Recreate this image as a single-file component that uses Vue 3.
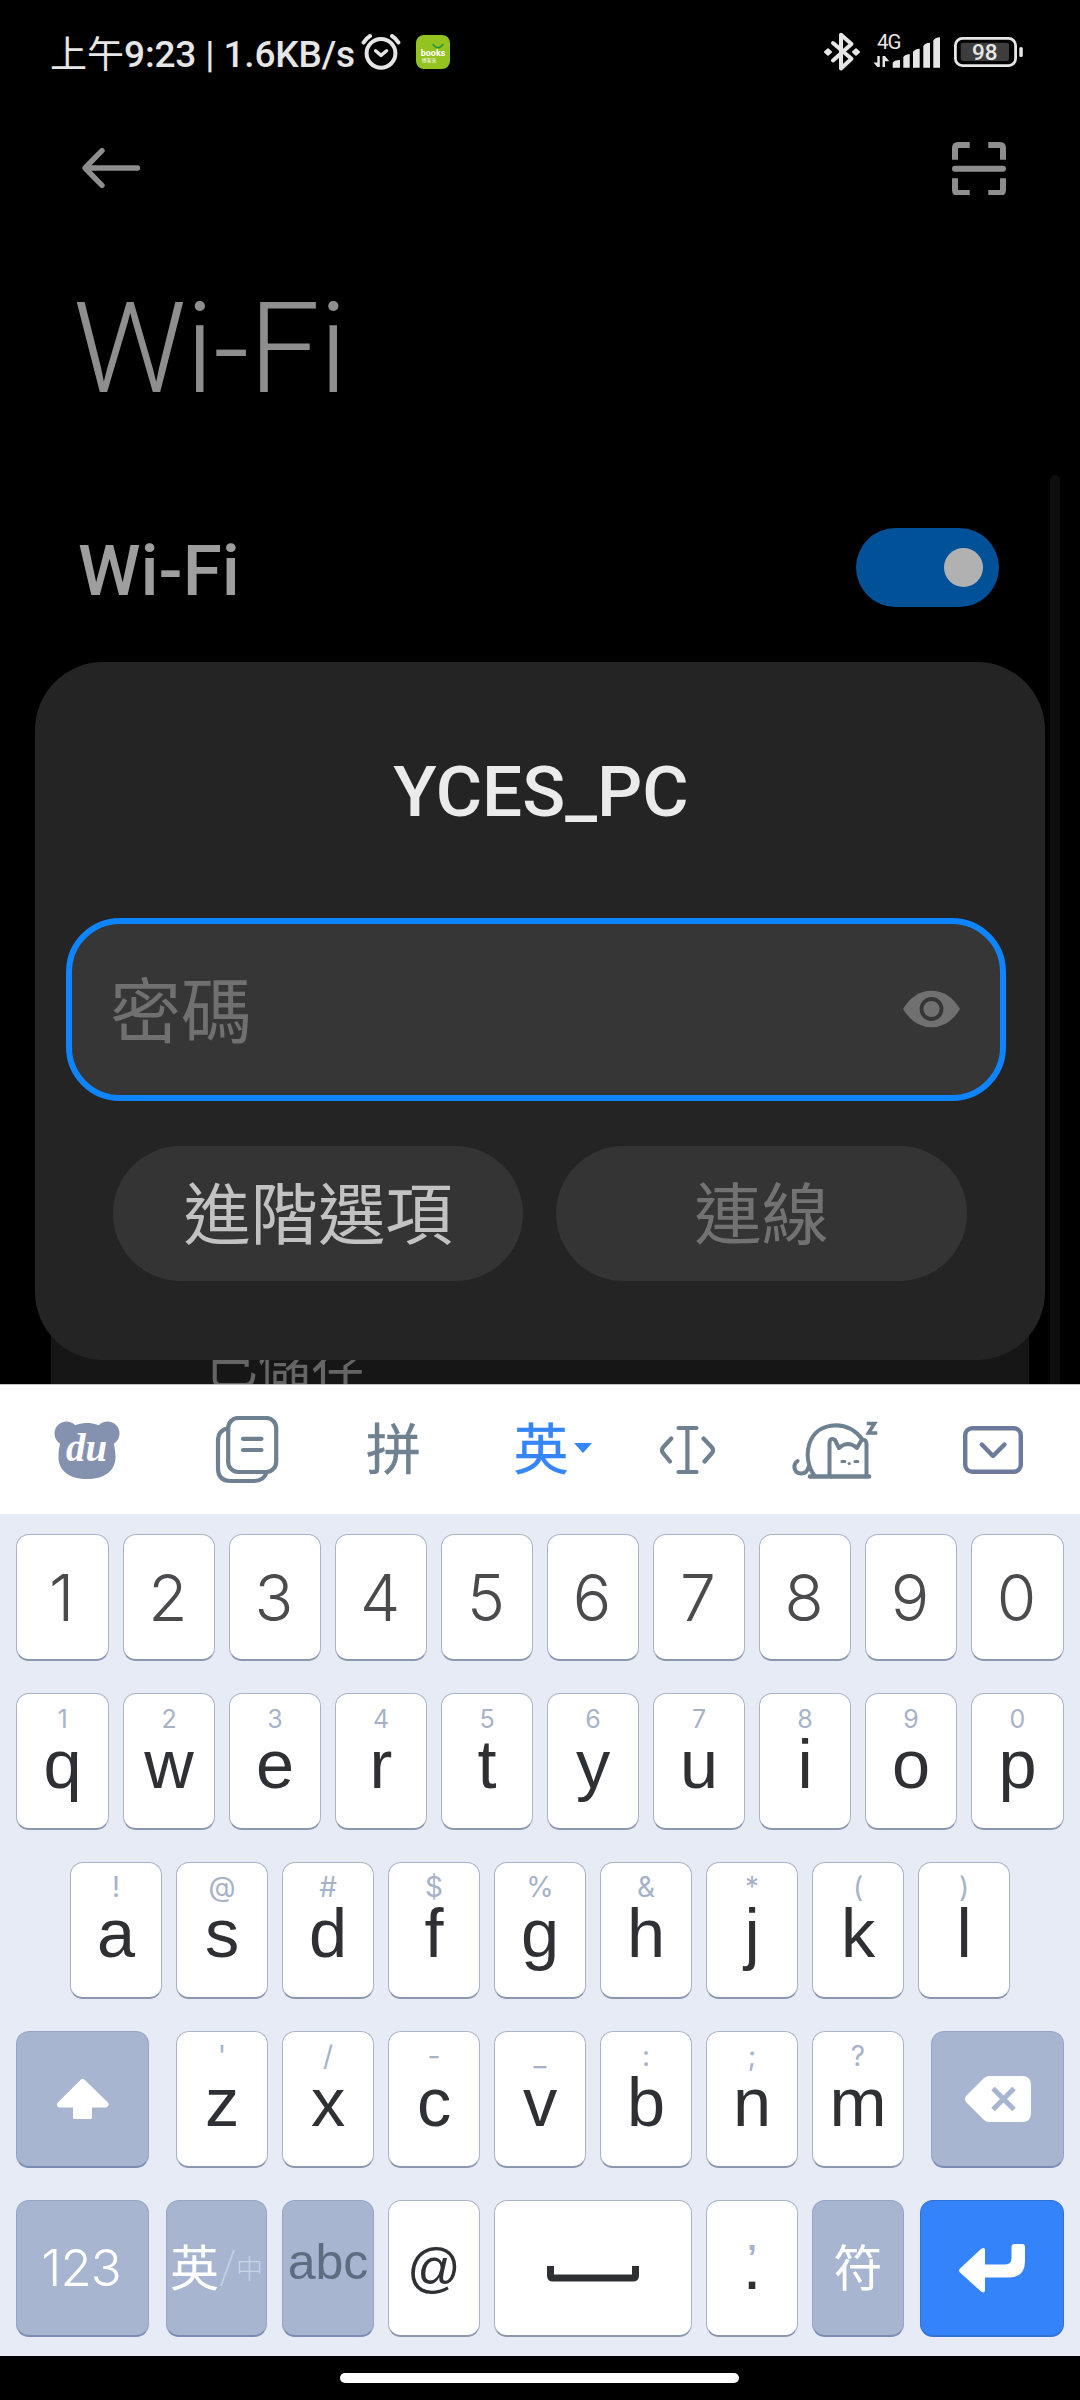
<script setup>
const digits = ['1', '2', '3', '4', '5', '6', '7', '8', '9', '0']
const zip = (letters, hints) => [...letters].map((main, i) => ({ main, hint: hints[i] }))
const rowQ = zip('qwertyuiop', '1234567890')
const rowA = zip('asdfghjkl', '!@#$%&*()')
const rowZ = zip('zxcvbnm', "'/-_:;?")
</script>

<template>
  <div class="phone">
    <header class="status">
      <span class="clock"><span class="cjk">上午</span><span class="lat">9:23 | 1.6KB/s</span></span>
      <svg class="alarm" width="40" height="40" viewBox="0 0 40 40" fill="none" stroke="#e6e6e6" stroke-width="4" stroke-linecap="round" stroke-linejoin="round">
        <circle cx="20" cy="21.3" r="14.4" />
        <path d="M14.6 18.8 20 23.4 25.6 18.8" stroke-width="3.4" />
        <path d="M2.6 10.6Q5 6.400 9 4M37.400 10.600Q35 6.400 31 4" />
      </svg>
      <span class="books">
        <svg width="12" height="7" viewBox="0 0 12 7"><path d="M.7 1Q6 8.500 11.300 1" fill="none" stroke="#2c8f3c" stroke-width="1.300" /></svg>
        <b>books</b><i>博客來</i>
      </span>
      <svg class="sys" width="200" height="44" viewBox="0 0 200 44">
        <g fill="none" stroke="#e6e6e6" stroke-width="4" stroke-linecap="round" stroke-linejoin="round">
          <path d="M9 13 27.500 28.800 17 38.500V4.800L27.500 14 9 30.500" />
        </g>
        <path d="M1 22l3-2.700 3 2.700-3 2.700zM29 22l3-2.700 3 2.700-3 2.700z" fill="#e6e6e6" stroke="#e6e6e6" stroke-width="2" stroke-linejoin="round" />
        <text x="53" y="19.300" font-size="20.500" fill="#e6e6e6" textLength="24.500">4G</text>
        <g fill="#e6e6e6">
          <path d="M53.300 26h2.500v11h-2.500L49.500 32.500h3.800zM58.500 37V26h2.500l4.300 5.200H61V37z" />
          <path d="M68.700 37.700V33q1-3 7.300-3v7.700zM79.300 37.700V27q1.500-2.500 6.400-3v13.700zM89 37.700V22q1.500-3 6.700-3.300v19zM99.300 37.700V16q1.500-3 6.700-3.300v25zM109.300 37.700V10.500q1.500-3 6.700-3.200v30.400z" />
          <rect x="195.300" y="17" width="3.500" height="10" rx="1.600" />
        </g>
        <rect x="131.400" y="8.400" width="60.200" height="27.200" rx="7" fill="none" stroke="#e6e6e6" stroke-width="2.800" />
        <rect x="136.700" y="12.700" width="48.300" height="18.300" rx="2.500" fill="#3d3d3d" />
        <text x="148" y="30.400" font-size="22.500" font-weight="500" fill="#e6e6e6">98</text>
      </svg>
    </header>

    <main class="page">
      <nav class="appbar">
        <svg width="60" height="44" viewBox="0 0 60 44" fill="none" stroke="#8e8e8e" stroke-width="5.400" stroke-linecap="round" stroke-linejoin="round">
          <path d="M21 4.700 4 22 21 39.300M5 22H56.500" />
        </svg>
        <svg width="54" height="54" viewBox="0 0 54 54" fill="none" stroke="#8e8e8e" stroke-width="6">
          <path d="M3 18.700V7q0-3 3-3H17.700M36.300 4H48q3 0 3 3V18.700M51 37.300V49q0 3-3 3H36.300M17.700 52H6q-3 0-3-3V37.300" />
          <path d="M3 27.800H51" stroke-linecap="round" />
        </svg>
      </nav>
      <h1 class="title">Wi-Fi</h1>
      <div class="setting">
        <span class="label">Wi-Fi</span>
        <span class="toggle"><i></i></span>
      </div>
      <section class="saved">已儲存</section>
      <div class="scrollbar"></div>

      <section class="dialog">
        <h2>YCES_PC</h2>
        <div class="field">
          <span>密碼</span>
          <svg width="57" height="38" viewBox="0 0 57 38">
            <path d="M0 19Q11 .700 28.500 .700T57 19Q46 37.300 28.500 37.300T0 19z" fill="#707070" />
            <circle cx="28.500" cy="19" r="10" fill="none" stroke="#363636" stroke-width="3.800" />
          </svg>
        </div>
        <div class="actions">
          <button class="on">進階選項</button>
          <button>連線</button>
        </div>
      </section>
    </main>

    <section class="keyboard">
      <div class="tools">
        <span class="bear">
          <svg width="66" height="60" viewBox="0 0 66 60" fill="#8592af">
            <circle cx="12.500" cy="13.500" r="12" /><circle cx="53.500" cy="13.500" r="12" />
            <path d="M33 3C47 3 61 12 61.500 36C62 52 49 59 33 59S4 52 4.500 36C5 12 19 3 33 3z" />
          </svg>
          <em>du</em>
        </span>
        <span>
          <svg width="64" height="68" viewBox="0 0 64 68" fill="none" stroke="#6f8090" stroke-width="4.200" stroke-linecap="round">
            <rect x="13.200" y="2" width="48" height="54" rx="10" />
            <path d="M13 12.500Q3 14 3 25V52Q3 65 16 65H38Q49 65 51.500 56.500M28 22.800H46.500M28 34H46.500" />
          </svg>
        </span>
        <span class="word">拼</span>
        <span class="word active">英<i></i></span>
        <span>
          <svg width="56" height="50" viewBox="0 0 56 50" fill="none" stroke="#6f8090" stroke-width="4.200" stroke-linecap="round" stroke-linejoin="round">
            <path d="M19.500 3H37.500M19.500 47H37.500M28.400 3V47M12.300 13.500 4 22.500Q2 25.500 4 28L11 36.500M44.500 13.500 53 22.500Q55 25.500 53 28L45.500 36.500" />
          </svg>
        </span>
        <span>
          <svg width="86" height="60" viewBox="0 0 86 60" fill="none" stroke="#6f8090" stroke-width="4" stroke-linecap="round" stroke-linejoin="round">
            <path d="M5.500 41C0 45 2.500 53.500 9 53.500Q15 53.500 16.500 47M22 55C10 38 14 6 44 5.200Q60 5.500 70 19" />
            <path d="M37.500 56V24Q37.500 16.500 43 20L47 28M47 28Q56 20 65 28M65 28 69 21Q74.500 17.500 74.500 25V56" />
            <path d="M18 56.500H77" stroke-width="4.600" />
            <path d="M50 41.500H52.800M63 41.500H65.800" stroke-width="3.200" />
            <circle cx="57.200" cy="43.500" r="1.600" fill="#6f8090" stroke="none" />
            <path d="M76.500 3.500H82.500L76.500 13H83.500" stroke-width="3.600" stroke-linecap="square" stroke-linejoin="miter" />
          </svg>
        </span>
        <span>
          <svg width="60" height="48" viewBox="0 0 60 48" fill="none" stroke="#6c7a9c" stroke-width="4.400" stroke-linecap="round" stroke-linejoin="round">
            <rect x="2.200" y="2.200" width="55.600" height="43.600" rx="7" />
            <path d="M18.800 18.500 30 30 41.500 18.500" />
          </svg>
        </span>
      </div>

      <div class="rows">
        <div class="row nums ten">
          <div v-for="d in digits" :key="d" class="key num">{{ d }}</div>
        </div>
        <div class="row ten">
          <div v-for="k in rowQ" :key="k.main" class="key">
            <small class="hd">{{ k.hint }}</small><span>{{ k.main }}</span>
          </div>
        </div>
        <div class="row inset">
          <div v-for="k in rowA" :key="k.main" class="key">
            <small>{{ k.hint }}</small><span>{{ k.main }}</span>
          </div>
        </div>
        <div class="row spread">
          <div class="key fn side">
            <svg width="52" height="42" viewBox="0 0 52 42" fill="#fff" stroke="#fff" stroke-width="6" stroke-linejoin="round">
              <path d="M25.500 4 48.500 26.500H3z" /><path d="M17.500 28H33.500V39.500H17.500z" stroke-width="3" />
            </svg>
          </div>
          <div class="letters">
            <div v-for="k in rowZ" :key="k.main" class="key">
              <small>{{ k.hint }}</small><span>{{ k.main }}</span>
            </div>
          </div>
          <div class="key fn side">
            <svg width="66" height="46" viewBox="0 0 66 46">
              <path d="M24 0H57Q66 0 66 9V37Q66 46 57 46H24Q21 46 18.500 43.500L1.500 26.500Q-1.500 23 1.500 19.500L18.500 2.500Q21 0 24 0z" fill="#fff" />
              <path d="M28 12.500 49 33.500M49 12.500 28 33.500" stroke="#a7b5d0" stroke-width="5" />
            </svg>
          </div>
        </div>
        <div class="row bottom">
          <div class="key fn side n123">123</div>
          <div class="key fn lang"><b>英</b><svg width="15" height="36" viewBox="0 0 15 36"><path d="M1 36 14 0" stroke="#c3cee1" stroke-width="2" /></svg><i>中</i></div>
          <div class="key fn abc">abc</div>
          <div class="key at">@</div>
          <div class="key space">
            <svg width="92" height="16" viewBox="0 0 92 16" fill="none" stroke="#2f3034" stroke-width="7"><path d="M3.500 0V9.500Q3.500 12 6 12H86Q88.500 12 88.500 9.500V0" /></svg>
          </div>
          <div class="key dot"><small>,</small><span>.</span></div>
          <div class="key fn sym">符</div>
          <div class="key enter">
            <svg width="66" height="50" viewBox="0 0 66 50" fill="#fff">
              <path d="M1 25.500 22 6Q26 3.500 26 7V21.500H46Q52.500 21.500 52.500 15V4Q52.500 1 55.500 1H63Q66 1 66 4V18Q66 34.500 50 34.500H26V47Q26 51 22 48.500L1 29.500Q-1 27.500 1 25.500z" />
            </svg>
          </div>
        </div>
      </div>
    </section>

    <footer class="gesture"><i></i></footer>
  </div>
</template>

<style>
body { margin: 0; background: #000; }
</style>

<style scoped>
.phone { width: 1080px; height: 2400px; display: flex; flex-direction: column; background: #000; overflow: hidden; font-family: Roboto, "Noto Sans CJK TC", sans-serif; }
.phone * { box-sizing: border-box; }
i, em { font-style: normal; }
svg { display: block; flex: none; }

.status { height: 108px; padding-left: 50px; display: flex; align-items: flex-start; color: #e6e6e6; flex: none; }
.clock { width: 311px; line-height: 109px; font-size: 37px; font-weight: 500; white-space: nowrap; display: flex; }
.clock .cjk { font-weight: 400; width: 74px; line-height: 111px; }
.clock .lat { letter-spacing: -0.15px; }
.alarm { margin-top: 32px; }
.books { width: 34px; height: 34px; margin: 35px 0 0 15px; border-radius: 8px; background: #93c31f; display: flex; flex-direction: column; align-items: center; color: #fff; overflow: hidden; }
.books svg { margin: 8px 0 0 10px; }
.books b { font-size: 9px; line-height: 7px; font-weight: 700; }
.books i { font-size: 5px; line-height: 5px; margin-left: -8px; margin-top: 1px; }
.sys { margin: 30px 0 0 374px; }

.page { height: 1276px; position: relative; overflow: hidden; flex: none; }
.appbar { height: 120px; padding: 0 74px 0 81px; display: flex; align-items: center; justify-content: space-between; }
.title { margin: 46px 0 0 73px; font-size: 126.500px; line-height: 150px; font-weight: 300; letter-spacing: -0.8px; color: #8e8e8e; }
.setting { margin-top: 83px; height: 120px; padding: 0 81px 0 78px; display: flex; align-items: center; justify-content: space-between; }
.label { padding-top: 7px; font-size: 71px; line-height: 80px; font-weight: 500; color: #9e9e9e; }
.toggle { width: 143px; height: 79px; border-radius: 40px; background: #005198; display: flex; align-items: center; justify-content: flex-end; padding-right: 16px; }
.toggle i { width: 39px; height: 39px; border-radius: 50%; background: #b1b1b1; }
.saved { margin: 540px 51px 0; height: 260px; padding: 154px 0 0 154px; background: #161616; color: #656565; font: 53px/80px "Noto Sans CJK TC", sans-serif; }
.scrollbar { position: absolute; left: 1050px; top: 367px; width: 10px; height: 960px; border-radius: 5px; background: #0d0d0d; }

.dialog { position: absolute; left: 35px; top: 554px; width: 1010px; height: 698px; padding: 80px 39px 0 31px; border-radius: 68px; background: #242424; }
.dialog h2 { margin: 0; padding-left: 10px; text-align: center; font-size: 71px; line-height: 100px; font-weight: 500; color: #ebebeb; }
.field { margin-top: 76px; height: 183px; border: 6px solid #0f84ff; border-radius: 54px; background: #363636; padding: 0 40px 2px 38px; display: flex; align-items: center; justify-content: space-between; }
.field span { font: 71px/100px "Noto Sans CJK TC", sans-serif; color: #707070; padding-bottom: 5px; }
.actions { margin-top: 45px; padding: 0 39px 0 47px; display: flex; gap: 33px; }
.actions button { flex: 1; height: 135px; padding: 0 0 8px; border: 0; border-radius: 68px; background: #343434; color: #727272; font: 67.300px/127px "Noto Sans CJK TC", sans-serif; }
.actions .on { flex: 0 0 410px; color: #c2c2c2; }

.keyboard { height: 972px; flex: none; background: #e6ebf6; font-family: "Liberation Sans", "Noto Sans CJK SC", sans-serif; }
.tools { height: 130px; border-top: 1px solid #bfc1c9; background: #fff; display: grid; grid-template-columns: 173px 147px 147px 173px 94px 202px 114px; }
.tools span { display: flex; align-items: center; justify-content: center; color: #6f8090; }
.tools .bear { position: relative; }
.bear em { position: absolute; left: 66px; top: 41px; font: italic 700 39px/44px "Liberation Serif", serif; color: #fff; }
.tools .word { font: 400 55px/118px "Noto Sans CJK SC", sans-serif; padding-bottom: 10px; -webkit-text-stroke: 0.4px currentColor; }
.tools .active { color: #3585fb; padding-right: 2px; }
.active i { margin: 6px 0 0 5px; border: 9px solid transparent; border-top: 10px solid #3585fb; border-bottom: 0; }

.rows { padding: 20px 16px 0; display: flex; flex-direction: column; gap: 32px; }
.row { display: flex; gap: 14px; height: 137px; }
.row.nums { height: 127px; }
.inset { padding: 0 54px; }
.spread { justify-content: space-between; }
.letters { display: flex; gap: 14px; }
.key { flex: none; width: 92px; border: 1px solid #aab4c6; border-bottom: 2px solid #8c96ad; border-radius: 13px; background: #fff; color: #2f3034; text-align: center; display: flex; flex-direction: column; align-items: center; }
.ten .key:first-child, .ten .key:last-child { width: 93px; }
.key small { font: 400 28px/48px Inter, sans-serif; height: 50px; color: #a6b2c8; }
.key small.hd { font: 400 25px/50px Inter, sans-serif; }
.key span { font-size: 68.500px; line-height: 41px; }
.key.num { font: 350 64px/125px Inter, sans-serif; color: #4b4b4e; display: block; padding-right: 2px; }
.key.fn { background: #a7b5d0; border-color: #98a5c2; border-bottom-color: #7b8bb3; color: #fff; justify-content: center; }
.key.side { width: 133px; }
.n123 { font: 350 51px/130px Inter, sans-serif; letter-spacing: -1px; padding-right: 3px; }
.key.lang { width: 101px; margin: 0 1px 0 3px; flex-direction: row; align-items: center; gap: 1px; }
.lang b { font: 400 49px/128px "Noto Sans CJK SC", sans-serif; padding-bottom: 6px; }
.lang i { font: 300 27px/136px "Noto Sans CJK SC", sans-serif; color: #c9d4e6; }
.key.abc { font-size: 50px; color: #5f6c80; padding-bottom: 13px; }
.key.at { font-size: 53px; justify-content: center; padding-bottom: 2px; }
.key.space { width: 198px; justify-content: center; padding-top: 12px; }
.key.dot small { font: 700 34px/74px "Liberation Sans", sans-serif; }
.dot span { margin-top: -6px; }
.key.sym { font: 400 49px/124px "Noto Sans CJK SC", sans-serif; padding-bottom: 6px; }
.key.enter { width: 144px; margin-left: 2px; background: #3583fa; border-color: #3272d2; justify-content: center; }

.gesture { flex: 1; display: flex; justify-content: center; padding: 17px 1px 0 0; }
.gesture i { width: 399px; height: 10px; border-radius: 5px; background: #fff; }
</style>
